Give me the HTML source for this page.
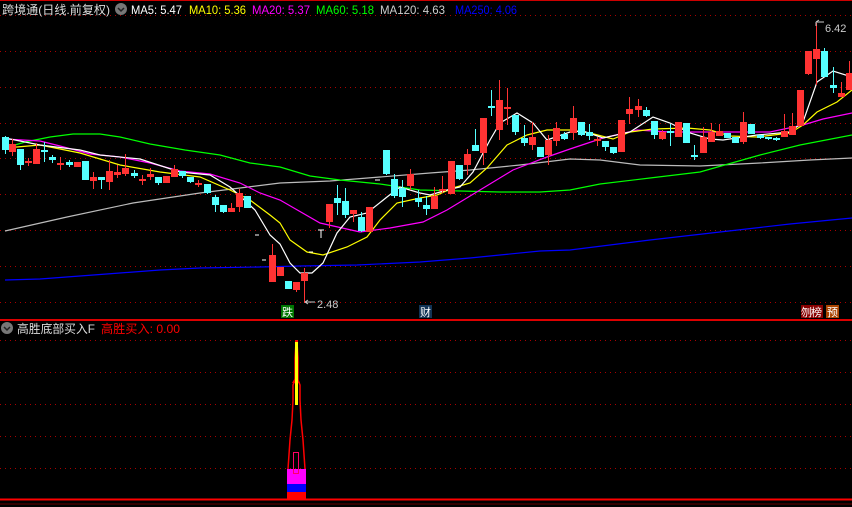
<!DOCTYPE html>
<html><head><meta charset="utf-8"><style>
html,body{margin:0;padding:0;background:#000;width:852px;height:507px;overflow:hidden}
svg{display:block}
text{font-family:"Liberation Sans","Noto Sans CJK SC",sans-serif}
</style></head><body>
<svg id="s" width="852" height="507" viewBox="0 0 852 507" xmlns="http://www.w3.org/2000/svg">
<rect width="852" height="507" fill="#000"/>
<line x1="0" y1="0.5" x2="852" y2="0.5" stroke="#c00" stroke-width="1"/>
<g id="grid" stroke="#a00" stroke-width="1" stroke-dasharray="1,4"></g>
<g id="ma" fill="none" stroke-width="1.2"></g>
<g id="c"></g>
<line x1="0" y1="320" x2="852" y2="320" stroke="#d00" stroke-width="2"/>
<line x1="0" y1="499.5" x2="852" y2="499.5" stroke="#f00" stroke-width="2"/>
<line x1="0" y1="504" x2="852" y2="504" stroke="#600" stroke-width="1"/>
<!-- header -->
<text x="2" y="14" font-size="12" fill="#ddd" textLength="108" lengthAdjust="spacingAndGlyphs">跨境通(日线.前复权)</text>
<circle cx="121" cy="9" r="6" fill="#777"/><path d="M118 8 L121 11 L124 8" stroke="#222" stroke-width="1.5" fill="none"/>
<text x="131" y="14" font-size="12" fill="#fff" textLength="51" lengthAdjust="spacingAndGlyphs">MA5: 5.47</text>
<text x="189" y="14" font-size="12" fill="#ff0" textLength="57" lengthAdjust="spacingAndGlyphs">MA10: 5.36</text>
<text x="252" y="14" font-size="12" fill="#f0f" textLength="58" lengthAdjust="spacingAndGlyphs">MA20: 5.37</text>
<text x="316" y="14" font-size="12" fill="#0f0" textLength="58" lengthAdjust="spacingAndGlyphs">MA60: 5.18</text>
<text x="380" y="14" font-size="12" fill="#ccc" textLength="65" lengthAdjust="spacingAndGlyphs">MA120: 4.63</text>
<text x="455" y="14" font-size="12" fill="#00f" textLength="62" lengthAdjust="spacingAndGlyphs">MA250: 4.06</text>
<!-- bottom header -->
<circle cx="7" cy="328" r="6" fill="#777"/><path d="M4 327 L7 330 L10 327" stroke="#222" stroke-width="1.5" fill="none"/>
<text x="17" y="333" font-size="12" fill="#ddd" textLength="78" lengthAdjust="spacingAndGlyphs">高胜底部买入F</text>
<text x="101" y="333" font-size="12" fill="#f00" textLength="79" lengthAdjust="spacingAndGlyphs">高胜买入: 0.00</text>
<!-- labels -->
<rect x="281" y="305" width="13" height="13" fill="#070"/><text x="282" y="316" font-size="11" fill="#fff">跌</text>
<rect x="419" y="305" width="13" height="13" fill="#135"/><text x="420" y="316" font-size="11" fill="#fff">财</text>
<rect x="801" y="305" width="22" height="13" fill="#800"/><text x="801" y="316" font-size="11" fill="#fff" textLength="21">刎榜</text>
<rect x="826" y="305" width="13" height="13" fill="#a40"/><text x="827" y="316" font-size="11" fill="#fff">预</text>
<text x="317" y="308" font-size="11" fill="#ccc">2.48</text>
<path d="M305 302 H315 M305 302 L308 300 M305 302 L308 304" stroke="#ccc" fill="none"/>
<text x="825" y="32" font-size="11" fill="#ccc">6.42</text>
<path d="M816 22 H824 M816 22 v4 M816 22 l3 -2" stroke="#ccc" fill="none"/>
<path d="M255 235 h4 M262 260 h4 M309 252 h4 M375 180 h5" stroke="#fff" stroke-width="1"/>
<path d="M318 230 h6 M321 230 v8" stroke="#fff"/>
<!-- indicator -->
<rect x="287" y="492" width="19" height="8" fill="#f00"/>
<rect x="287" y="484" width="19" height="8" fill="#00f"/>
<rect x="287" y="469" width="19" height="15" fill="#f0f"/>
<rect x="293.5" y="452.5" width="5" height="21" fill="none" stroke="#f06" stroke-width="1"/>
<path d="M288 469 L290 440 L292 420 L293 400 L293 385 L295 380 L295 358 L296 342 M305 469 L303 440 L301 420 L300 400 L300 385 L298 380 L298 358 L297 342" stroke="#f00" stroke-width="1.5" fill="none"/>
<path d="M292 383 L296 376 L300 383 Z" fill="#f00"/>
<rect x="295" y="342" width="3" height="63" fill="#ff0"/>
<rect x="295" y="340" width="3" height="2" fill="#f00"/>
</svg>
<script>
var ns="http://www.w3.org/2000/svg";
function el(p,t,a){var e=document.createElementNS(ns,t);for(var k in a)e.setAttribute(k,a[k]);p.appendChild(e);return e;}
var g=document.getElementById('grid');
[15,51,87,123,158,194,230,266,302,340,372,404,436,468].forEach(function(y){el(g,'line',{x1:0,y1:y+.5,x2:852,y2:y+.5});});
var ma=document.getElementById('ma');
function pl(c,pts){el(ma,'polyline',{points:pts,stroke:c});}
pl('#00f',"5,280 40,279 80,276 120,273 160,270 200,268 260,267 300,266 357,265 420,262 470,258 500,255 540,251 570,250 650,240 720,232 790,224 852,218");
pl('#bbb',"5,231 67,217 133,203 200,193 280,183 330,181 380,177 430,173 470,170 520,165 570,159 600,160 640,165 700,166 760,163 810,160 852,158");
pl('#0f0',"5,148 25,142 50,137 73,134 100,134 120,137 150,144 185,150 220,155 250,163 280,167 310,176 340,180 380,184 420,190 460,191 500,192 540,192 570,190 600,184 650,178 700,172 760,155 800,145 852,135");
pl('#f0f',"5,139 40,141 60,146 90,154 120,157 150,163 180,171 210,174 240,183 260,193 280,200 320,223 360,232 390,228 423,222 447,210 480,190 513,170 547,157 570,149 603,138 637,130 670,132 703,132 737,132 770,132 803,125 823,119 852,113");
pl('#ff0',"5,148 40,145 80,153 120,165 160,172 200,177 230,190 250,200 270,215 280,223 290,240 307,252 323,255 347,247 367,237 380,220 397,203 420,198 437,195 453,188 470,183 487,168 507,145 527,135 547,130 570,130 590,133 613,139 630,132 653,129 687,128 710,130 730,136 757,137 790,133 803,125 817,112 837,102 852,90");
pl('#fff',"5,138 40,145 80,150 100,155 140,159 180,172 210,175 230,187 240,196 255,210 270,235 280,244 290,263 300,273 312,273 323,263 337,233 350,217 367,213 387,197 400,187 420,193 430,195 447,190 460,187 473,172 490,140 500,123 517,113 533,123 547,140 570,132 583,131 603,138 630,132 653,117 670,123 690,133 710,139 723,140 757,135 790,132 803,122 817,82 833,71 852,77");
var C=[
[5,137,150,136,154,'c'],[12,144,152,139,156,'r'],[20,149,165,149,170,'c'],[28,161,163,158,166,'r'],[36,149,164,143,164,'r'],[44,150,152,142,162,'c'],[52,157,160,155,163,'c'],[60,163,165,157,170,'r'],[69,162,165,160,167,'c'],[77,162,167,162,167,'r'],[85,161,180,161,180,'c'],[93,177,181,172,189,'r'],[101,177,180,177,189,'c'],[109,171,182,160,190,'r'],[117,172,175,165,178,'r'],[125,168,174,154,176,'r'],[134,173,176,170,178,'c'],[142,179,181,175,185,'r'],[150,174,177,168,180,'r'],[158,177,183,177,185,'c'],[166,176,183,176,183,'r'],[174,169,177,165,177,'r'],[182,171,176,171,178,'c'],[190,177,182,177,183,'c'],[198,183,185,180,187,'r'],[207,184,193,184,194,'c'],[215,197,205,195,212,'c'],[223,205,212,205,213,'c'],[231,208,212,203,212,'r'],[239,193,207,189,212,'r'],[247,196,208,196,208,'c'],
[272,255,282,244,282,'r'],[280,267,276,267,276,'r'],[288,281,289,281,289,'c'],[296,282,290,282,292,'r'],[304,273,281,268,303,'r'],
[329,204,222,204,228,'r'],[337,198,203,185,215,'c'],[345,201,215,188,218,'c'],[353,210,214,210,222,'r'],[361,217,231,212,232,'c'],[369,207,232,207,232,'r'],[386,150,174,150,175,'c'],[394,179,196,174,198,'c'],[402,188,197,180,207,'c'],[410,174,186,169,190,'r'],[418,198,202,190,207,'c'],[426,205,209,196,215,'c'],[434,196,209,187,209,'r'],[442,189,191,176,193,'r'],[451,161,194,161,194,'r'],[459,165,179,165,180,'c'],[467,154,165,149,175,'r'],[475,145,151,129,151,'c'],[483,118,153,118,165,'r'],[491,106,108,90,116,'c'],[499,100,130,80,140,'r'],[507,107,109,88,125,'r'],[515,115,132,115,135,'c'],[524,138,143,125,146,'c'],[532,137,145,122,150,'r'],[540,147,157,147,157,'c'],[548,140,155,135,165,'r'],[556,128,141,122,146,'r'],[564,134,139,132,140,'c'],
[573,118,133,106,140,'r'],[581,122,135,122,136,'c'],[589,132,136,124,140,'c'],[597,139,141,137,146,'r'],[605,141,147,141,151,'c'],[613,147,153,147,154,'c'],[621,120,152,120,152,'r'],[629,109,114,97,124,'r'],[638,106,110,99,117,'r'],[646,110,116,107,117,'c'],[654,121,135,121,139,'c'],[662,132,139,130,140,'r'],[670,131,133,124,146,'c'],[678,122,137,122,137,'r'],[686,123,143,123,143,'c'],[694,155,157,145,160,'c'],[703,137,153,127,153,'r'],[711,132,142,123,142,'r'],[719,131,136,124,136,'r'],[727,133,138,133,138,'c'],[735,137,143,137,143,'c'],[743,122,142,112,144,'r'],[751,124,134,124,134,'c'],[760,135,138,135,139,'c'],[768,137,139,137,140,'c'],[776,138,140,137,141,'c'],[784,131,137,114,137,'r'],[792,126,135,113,135,'r'],[800,90,126,90,126,'r'],[808,51,74,51,75,'r'],[816,49,59,23,85,'r'],[824,51,77,48,77,'c'],[833,85,88,67,93,'c'],[841,93,97,82,97,'r'],[849,73,90,61,90,'r']];
var cg=document.getElementById('c');
C.forEach(function(d){var col=d[5]=='r'?'#ff3333':'#55ffff';
el(cg,'line',{x1:d[0]+.5,y1:d[3],x2:d[0]+.5,y2:d[4],stroke:col});
var h=Math.max(1,d[2]-d[1]);el(cg,'rect',{x:d[0]-3,y:d[1],width:7,height:h,fill:col});});
</script>
</body></html>
